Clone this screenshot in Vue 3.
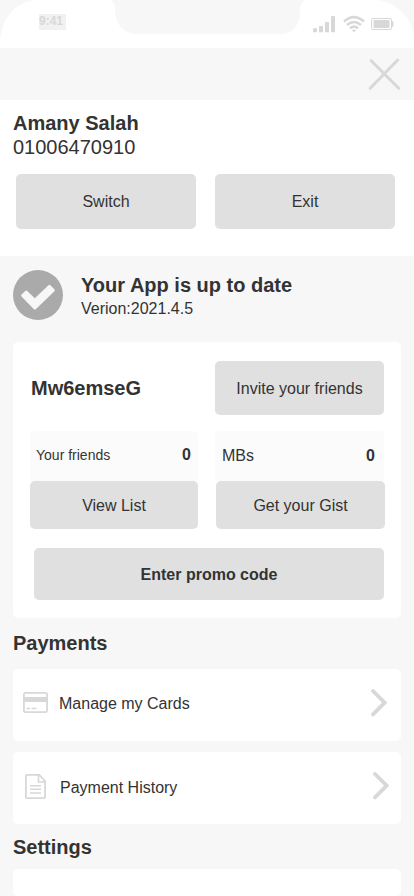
<script setup>
const payments = [
  { id: 'cards', label: 'Manage my Cards' },
  { id: 'history', label: 'Payment History' },
]
</script>

<template>
  <main class="screen">
    <header class="status">
      <svg class="frame" viewBox="0 0 414 48" width="414" height="48">
        <path fill="#fff" d="M0 48V45C0 20 14 2 36 0H109C113 0 115 4 115 9C115 24 123 34 138 34H280C293 34 300 25 300 12C300 6 300 3 306 0H376C398 2 414 20 414 40V48Z" />
      </svg>
      <span class="time">9:41</span>
      <svg class="signals" viewBox="0 0 82 18" width="82" height="18" fill="#d8d8d8">
        <rect x="0" y="13.3" width="4" height="4" rx=".5" />
        <rect x="6" y="11" width="4" height="6.3" rx=".5" />
        <rect x="12" y="7" width="4" height="10.3" rx=".5" />
        <rect x="18" y="1" width="4" height="16.3" rx=".5" />
        <g fill="none" stroke="#d8d8d8" stroke-width="2.6">
          <path d="M31 6.4Q41-2.2 51 6.4" />
          <path d="M34 10Q41 4 48 10" />
          <path d="M37 13.3Q41 9.8 45 13.3" />
        </g>
        <path d="M39 15.2Q41 14 43 15.2L41 17.2Z" />
        <rect x="58.5" y="3.5" width="20" height="11" rx="1.5" fill="none" stroke="#d8d8d8" />
        <rect x="60.5" y="5" width="16" height="8" rx=".5" />
        <path d="M79 6H80Q81 9 80 12H79Z" />
      </svg>
    </header>

    <nav class="topbar">
      <svg viewBox="0 0 34 34" width="34" height="34" fill="none" stroke="#d8d8d8" stroke-width="3" stroke-linecap="round">
        <path d="M3.2 3.7L30.7 31.2M29.7 3L2.2 31.2" />
      </svg>
    </nav>

    <section class="account">
      <h2>Amany Salah</h2>
      <p class="phone">01006470910</p>
      <div class="actions">
        <button>Switch</button>
        <button>Exit</button>
      </div>
    </section>

    <section class="update">
      <svg viewBox="0 0 50 50" width="50" height="50">
        <circle cx="25" cy="25" r="25" fill="#aaa" />
        <path d="M8.5 26.5Q7.6 25.5 8.5 24.5L12.2 20.9Q13.2 20 14.2 20.9L21.8 28.3L35.5 15.3Q36.5 14.4 37.5 15.4L41.4 19.2Q42.3 20.2 41.4 21.2L23 38.9Q21.8 40 20.7 38.9Z" fill="#f7f7f7" />
      </svg>
      <div class="update-text">
        <h2>Your App is up to date</h2>
        <p>Verion:2021.4.5</p>
      </div>
    </section>

    <section class="referral">
      <div class="invite">
        <h2>Mw6emseG</h2>
        <button>Invite your friends</button>
      </div>
      <div class="stats">
        <div class="stat friends">
          <div class="stat-head"><span>Your friends</span><b>0</b></div>
          <button>View List</button>
        </div>
        <div class="stat mbs">
          <div class="stat-head"><span>MBs</span><b>0</b></div>
          <button>Get your Gist</button>
        </div>
      </div>
      <button class="promo">Enter promo code</button>
    </section>

    <h2 class="title">Payments</h2>
    <div class="list">
      <div v-for="item in payments" :key="item.id" class="row" :class="item.id">
        <svg v-if="item.id === 'cards'" class="icon" viewBox="0 0 25 21" width="25" height="21">
          <rect x=".9" y=".9" width="23.2" height="19.2" rx="1.5" fill="none" stroke="#d8d8d8" stroke-width="1.8" />
          <path d="M1 5H24V10H1Z" fill="#d8d8d8" />
          <path d="M3.5 16.5H7M8.5 16.5H13.5" stroke="#d8d8d8" stroke-width="1.4" />
        </svg>
        <svg v-else class="icon" viewBox="0 0 21 25" width="21" height="25" fill="none" stroke="#d8d8d8" stroke-width="1.8">
          <path d="M1.9.9H14.2L20.1 7V23.1Q20.1 24.1 19.1 24.1H1.9Q.9 24.1.9 23.1V1.9Q.9.9 1.9.9Z" />
          <path d="M13.5 1V8H20M5 11.7H16M5 15.3H16M5 19H16" stroke-width="1.6" />
        </svg>
        <span>{{ item.label }}</span>
        <svg class="chevron" viewBox="0 0 16 28" width="16" height="28" fill="none" stroke="#d8d8d8" stroke-width="3.8" stroke-linecap="round">
          <path d="M2 2L13.7 13.7L2 25.4" />
        </svg>
      </div>
    </div>

    <h2 class="title settings">Settings</h2>
    <div class="setting-card"></div>
  </main>
</template>

<style>
body {
  margin: 0;
  background: #f7f7f7;
}
</style>

<style scoped>
* {
  box-sizing: border-box;
}
.screen {
  width: 414px;
  height: 896px;
  overflow: hidden;
  background: #f7f7f7;
  color: #333;
  font: 16px/18px "Liberation Sans", Arial, sans-serif;
}
h2,
p {
  margin: 0;
}
h2 {
  font-size: 20px;
  line-height: 24px;
  font-weight: 700;
}
svg {
  display: block;
  flex: none;
}
button {
  display: block;
  border: 0;
  padding: 0;
  border-radius: 5px;
  background: #e0e0e0;
  color: inherit;
  font: inherit;
}
.status {
  position: relative;
  height: 48px;
  display: flex;
  justify-content: space-between;
  align-items: flex-start;
  padding: 14px 20px 0 39px;
}
.frame {
  position: absolute;
  left: 0;
  top: 0;
}
.time {
  position: relative;
  width: 27px;
  height: 16px;
  background: #f1f1f1;
  color: #d8d8d8;
  font-size: 12px;
  line-height: 14px;
  font-weight: 700;
}
.signals {
  position: relative;
  margin-top: 1px;
  margin-right: -1px;
}
.topbar {
  height: 52px;
  padding: 9px 12px 0;
  display: flex;
  justify-content: flex-end;
}
.account {
  height: 156px;
  padding: 11px 19px 0 13px;
  background: #fff;
}
.phone {
  font-size: 20px;
  line-height: 24px;
}
.actions {
  display: flex;
  gap: 19px;
  margin: 15px 0 0 3px;
}
.actions button {
  width: 180px;
  height: 55px;
}
.update {
  display: flex;
  height: 86px;
  padding: 14px 13px 0;
  gap: 18px;
}
.update-text {
  padding-top: 3px;
}
.update-text p {
  line-height: 24px;
}
.referral {
  width: 388px;
  height: 276px;
  margin-left: 13px;
  padding: 19px 16px 0 17px;
  border-radius: 5px;
  background: #fff;
}
.referral button {
  padding-top: 2px;
}
.invite {
  display: flex;
  justify-content: space-between;
  align-items: center;
  padding: 0 1px;
}
.invite button {
  width: 169px;
  height: 54px;
}
.stats {
  display: flex;
  gap: 17px;
  margin-top: 16px;
}
.stat {
  width: 169px;
}
.friends {
  width: 168px;
}
.stat-head {
  display: flex;
  justify-content: space-between;
  align-items: center;
  height: 50px;
  padding: 0 9px 0 7px;
  border-radius: 5px 5px 0 0;
  background: #fbfbfb;
}
.friends .stat-head {
  padding: 0 7px 2px 6px;
}
.friends .stat-head span {
  font-size: 14px;
}
.stat button {
  width: 100%;
  height: 48px;
}
.mbs button {
  position: relative;
  left: 1px;
}
.promo {
  width: 350px;
  height: 52px;
  margin: 19px 0 0 4px;
  font-weight: 700;
}
.title {
  margin: 13px 13px 14px;
}
.list {
  display: grid;
  gap: 11px;
  padding: 0 13px;
}
.row {
  display: flex;
  align-items: center;
  height: 72px;
  padding: 0 14px 4px 10px;
  border-radius: 5px;
  background: #fff;
}
.row span {
  margin: 1px auto 0 11px;
}
.cards .icon {
  margin-bottom: 2px;
}
.history {
  padding: 0 12px 4px 12px;
}
.history span {
  margin: 3px auto 0 14px;
}
.title.settings {
  margin: 11px 13px 10px;
}
.setting-card {
  height: 27px;
  margin: 0 13px;
  border-radius: 5px;
  background: #fff;
}
</style>
